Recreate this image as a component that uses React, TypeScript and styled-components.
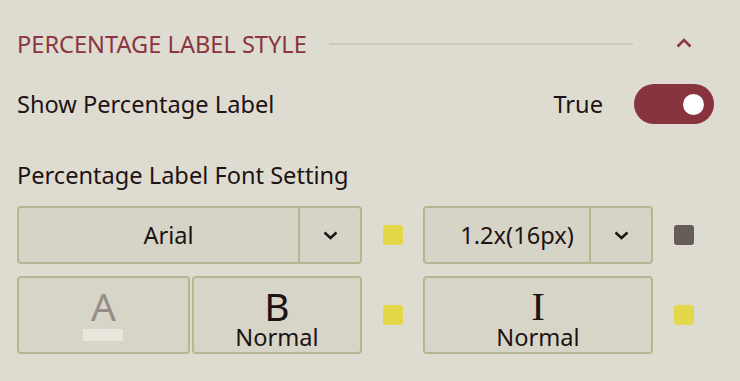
import React, { useState } from "react";
import styled, { createGlobalStyle } from "styled-components";

const GlobalStyle = createGlobalStyle`
  html, body {
    margin: 0;
    background: #dedcd0;
  }
  body {
    font-family: "Noto Sans", "Open Sans", sans-serif;
    color: #1e1314;
  }
`;

const Panel = styled.div`
  width: 740px;
  height: 381px;
  box-sizing: border-box;
  padding: 24px 26px 0 17px;
  background: #dedcd0;
`;

const SectionHeader = styled.div`
  display: flex;
  align-items: center;
  height: 40px;
`;

const Title = styled.div`
  font-size: 23.6px;
  color: #8a3541;
  white-space: nowrap;
`;

const Rule = styled.div`
  width: 304px;
  height: 2px;
  margin-left: 22px;
  background: #d3c8bd;
`;

const Collapse = styled.button`
  border: 0;
  background: none;
  padding: 0;
  margin-left: 43px;
  width: 16px;
  height: 12px;
  display: flex;
  cursor: pointer;
`;

const Row = styled.div`
  display: flex;
  align-items: center;
  justify-content: space-between;
  margin-top: 20px;
  height: 40px;
  font-size: 23.6px;
`;

const ValueGroup = styled.div`
  display: flex;
  align-items: center;
  gap: 31px;
`;

const Track = styled.button<{ $on: boolean }>`
  width: 80px;
  height: 40px;
  border: 0;
  border-radius: 20px;
  padding: 0 10px;
  display: flex;
  align-items: center;
  justify-content: ${(p) => (p.$on ? "flex-end" : "flex-start")};
  background: ${(p) => (p.$on ? "#88343f" : "#b9b494")};
  cursor: pointer;
`;

const Knob = styled.span`
  width: 21px;
  height: 21px;
  border-radius: 50%;
  background: #fff;
`;

const Label = styled.div`
  font-size: 23.6px;
  margin-top: 36px;
  line-height: 30px;
`;

const Grid = styled.div`
  display: grid;
  grid-template-columns: 345px 20px 230px 20px;
  grid-template-rows: 58px 78px;
  column-gap: 20.5px;
  row-gap: 12px;
  align-items: center;
  margin-top: 16px;
`;

const Select = styled.div`
  height: 58px;
  box-sizing: border-box;
  display: flex;
  border: 2px solid #b9b494;
  border-radius: 4px;
  background: #d6d4c7;
`;

const SelectValue = styled.div`
  flex: 1;
  display: flex;
  align-items: center;
  justify-content: center;
  padding-left: 20px;
  font-size: 23.6px;
`;

const SelectArrow = styled.div`
  width: 60px;
  display: flex;
  align-items: center;
  justify-content: center;
  border-left: 2px solid #b9b494;
`;

const Swatch = styled.div<{ $color: string }>`
  width: 20px;
  height: 20px;
  border-radius: 3px;
  background: ${(p) => p.$color};
`;

const ButtonPair = styled.div`
  display: flex;
  gap: 2px;
  height: 78px;
`;

const StyleButton = styled.button<{ $grow?: number }>`
  flex: ${(p) => p.$grow ?? 1};
  height: 78px;
  box-sizing: border-box;
  border: 2px solid #b9b494;
  border-radius: 4px;
  background: #d7d5c8;
  display: flex;
  flex-direction: column;
  align-items: center;
  justify-content: flex-start;
  padding: 11.6px 0 0;
  font-family: inherit;
  color: #1e1314;
  cursor: pointer;
`;

const Glyph = styled.span<{ $serif?: boolean; $muted?: boolean }>`
  font-size: ${(p) => (p.$serif ? "41px" : "39px")};
  line-height: 32px;
  height: 32px;
  font-family: ${(p) =>
    p.$serif ? '"Liberation Serif", "DejaVu Serif", serif' : "inherit"};
  color: ${(p) => (p.$muted ? "#958d86" : "#1e1314")};
`;

const Caption = styled.span`
  font-size: 23.6px;
  line-height: 24px;
  margin-top: 3px;
`;

const Underline = styled.span`
  width: 40px;
  height: 12px;
  margin-top: 7.4px;
  background: #e6e6dc;
`;

const ChevronDown = () => (
  <svg width="15" height="9" viewBox="0 0 15 9">
    <path d="M1.5 1.5 L7.5 7 L13.5 1.5" fill="none" stroke="#1e1314" strokeWidth="2.4" />
  </svg>
);

const ChevronUp = () => (
  <svg width="16" height="10" viewBox="0 0 16 10">
    <path d="M1.5 8.5 L8 2 L14.5 8.5" fill="none" stroke="#8a3541" strokeWidth="2.6" />
  </svg>
);

export default function App() {
  const [show, setShow] = useState(true);

  return (
    <>
      <GlobalStyle />
      <Panel>
        <SectionHeader>
          <Title>PERCENTAGE LABEL STYLE</Title>
          <Rule />
          <Collapse>
            <ChevronUp />
          </Collapse>
        </SectionHeader>

        <Row>
          <span>Show Percentage Label</span>
          <ValueGroup>
            <span>{show ? "True" : "False"}</span>
            <Track $on={show} onClick={() => setShow(!show)}>
              <Knob />
            </Track>
          </ValueGroup>
        </Row>

        <Label>Percentage Label Font Setting</Label>

        <Grid>
          <Select>
            <SelectValue>Arial</SelectValue>
            <SelectArrow>
              <ChevronDown />
            </SelectArrow>
          </Select>
          <Swatch $color="#e3d84a" />
          <Select>
            <SelectValue>1.2x(16px)</SelectValue>
            <SelectArrow>
              <ChevronDown />
            </SelectArrow>
          </Select>
          <Swatch $color="#675d58" />

          <ButtonPair>
            <StyleButton $grow={173}>
              <Glyph $muted>A</Glyph>
              <Underline />
            </StyleButton>
            <StyleButton $grow={170}>
              <Glyph>B</Glyph>
              <Caption>Normal</Caption>
            </StyleButton>
          </ButtonPair>
          <Swatch $color="#e3d84a" />
          <StyleButton>
            <Glyph $serif>I</Glyph>
            <Caption>Normal</Caption>
          </StyleButton>
          <Swatch $color="#e3d84a" />
        </Grid>
      </Panel>
    </>
  );
}
